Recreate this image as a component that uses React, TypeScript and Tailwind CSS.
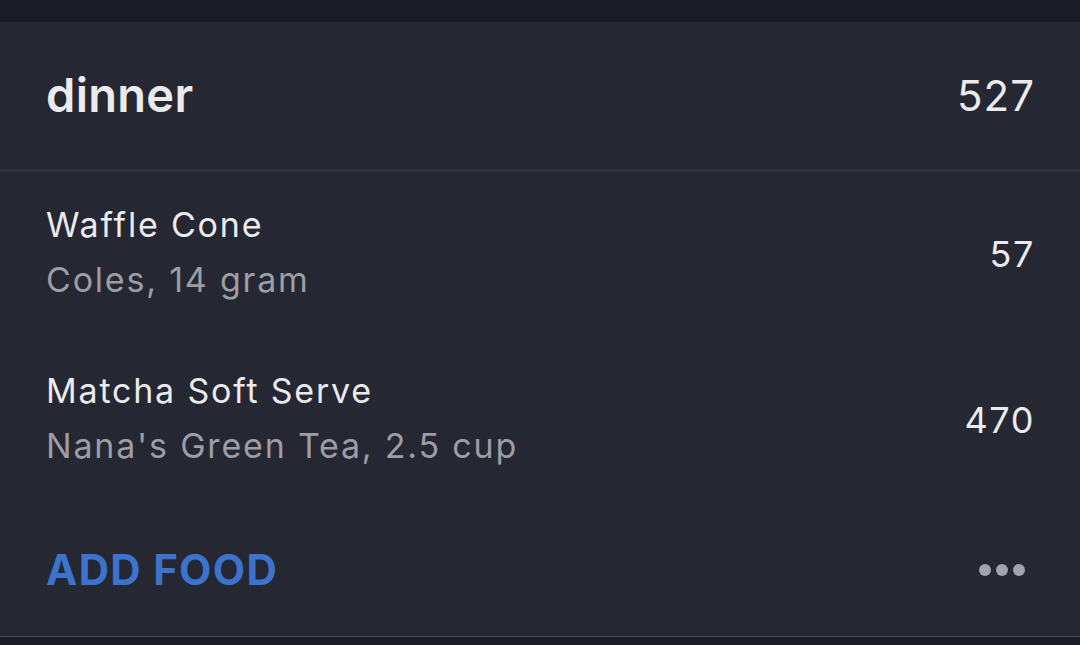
export default function App() {
    const items = [
        { name: "Waffle Cone", detail: "Coles, 14 gram", cal: 57 },
        { name: "Matcha Soft Serve", detail: "Nana's Green Tea, 2.5 cup", cal: 470 },
    ];

    return (
        <div className="w-[1080px] h-[645px] bg-[#191b26] flex flex-col overflow-hidden font-['Inter',sans-serif]">
            <div className="h-[22px] shrink-0" />
            <div className="flex-1 bg-[#252733] flex flex-col">
                {/* header */}
                <div className="h-[149px] shrink-0 flex items-center justify-between pl-[46px] pr-[45px] border-b border-[#3a3c48]">
                    <h1 className="text-[47px] font-semibold text-[#ebebee] tracking-[0.3px] -mt-[2px]">dinner</h1>
                    <span className="text-[42px] text-[#ebebee] tracking-[1px] -mt-[2px]">527</span>
                </div>

                {/* entries */}
                {items.map((item) => (
                    <div key={item.name} className="h-[166px] shrink-0 flex items-center justify-between pl-[46px] pr-[45px]">
                        <div className="flex flex-col gap-[9px] -mt-[3px]">
                            <span className="text-[34px] leading-[46px] tracking-[1.8px] text-[#ebebee]">{item.name}</span>
                            <span className="text-[34px] leading-[46px] tracking-[1.8px] text-[#9c9da5]">{item.detail}</span>
                        </div>
                        <span className="text-[36px] tracking-[1.6px] text-[#ebebee]">{item.cal}</span>
                    </div>
                ))}

                {/* footer */}
                <div className="flex-1 flex items-center justify-between pl-[46px] pr-[55px] border-b border-[#4a4c57]">
                    <span className="text-[42px] font-bold text-[#3c73cc] tracking-[1.3px]">ADD FOOD</span>
                    <div className="flex gap-[5px]">
                        <span className="w-[12px] h-[12px] rounded-full bg-[#a3a4ab]" />
                        <span className="w-[12px] h-[12px] rounded-full bg-[#a3a4ab]" />
                        <span className="w-[12px] h-[12px] rounded-full bg-[#a3a4ab]" />
                    </div>
                </div>
            </div>
            <div className="h-[8px] shrink-0" />
        </div>
    );
}
